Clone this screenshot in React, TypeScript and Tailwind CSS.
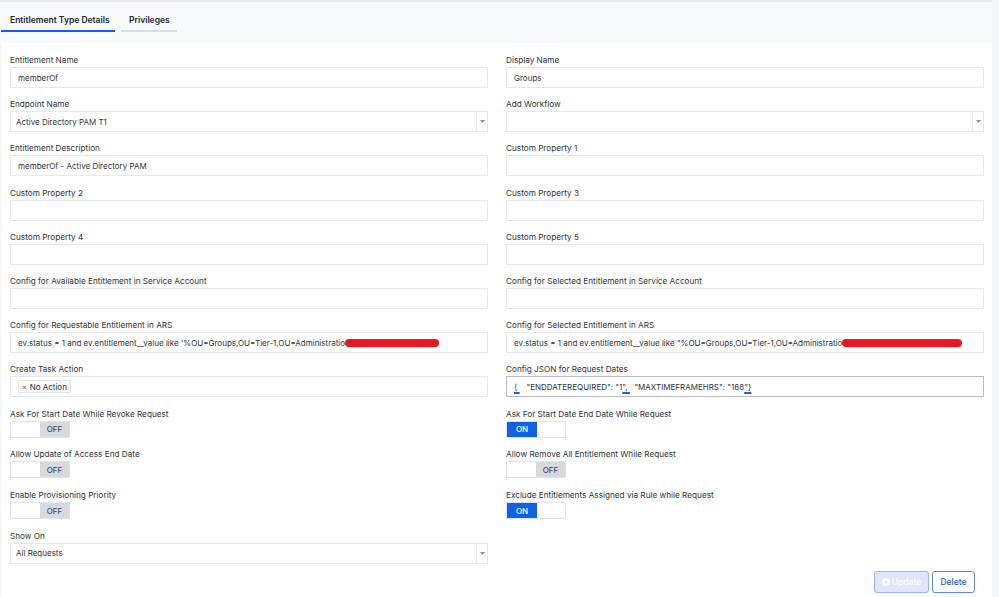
import React from "react";

const font = { fontFamily: "Inter, 'Liberation Sans', sans-serif" };

function Label({ children }: { children: React.ReactNode }) {
  return <div className="h-[11px] leading-[11px] text-[8.2px] text-[#2f343a] mb-[1px] whitespace-nowrap">{children}</div>;
}

function Input({ value, children }: { value?: string; children?: React.ReactNode }) {
  return (
    <div className="h-[21px] border border-[#e6e8eb] bg-white flex items-center px-[7px] text-[8px] text-[#2f343b] whitespace-nowrap overflow-hidden">
      {value}
      {children}
    </div>
  );
}

function Select({ value }: { value?: string }) {
  return (
    <div className="h-[21px] border border-[#e6e8eb] bg-white flex items-center text-[8px] text-[#2f343b]">
      <div className="flex-1 px-[5px] whitespace-nowrap">{value}</div>
      <div className="w-[11px] h-full border-l border-[#e6e8eb] flex items-center justify-center">
        <svg width="5" height="3" viewBox="0 0 5 3"><path d="M0 0 L5 0 L2.5 3 Z" fill="#8a8f96" /></svg>
      </div>
    </div>
  );
}

function Toggle({ on }: { on: boolean }) {
  return (
    <div className="flex h-[17px] w-[60px] border border-[#dfe2e6] bg-white text-[8px] font-medium">
      {on ? (
        <>
          <div className="w-[30px] bg-[#0f62e6] text-white flex items-center justify-center">ON</div>
          <div className="flex-1 bg-white" />
        </>
      ) : (
        <>
          <div className="w-[29px] bg-white" />
          <div className="flex-1 bg-[#d5dae1] text-[#4a4f57] flex items-center justify-center">OFF</div>
        </>
      )}
    </div>
  );
}

function Field({ label, children, toggle }: { label: string; children: React.ReactNode; toggle?: boolean }) {
  return (
    <div className={toggle ? "mb-[11.8px]" : "mb-[11.2px]"}>
      <Label>{label}</Label>
      {children}
    </div>
  );
}

function Redact({ w }: { w: string }) {
  return <span className={"inline-block h-[8px] rounded-full bg-[#e5191f] align-middle " + w} />;
}

function U({ children }: { children: React.ReactNode }) {
  return <span className="underline decoration-[#2a5bd7] decoration-[1.5px] underline-offset-2">{children}</span>;
}

export default function App() {
  const sql = "ev.status = 1 and ev.entitlement__value like '%OU=Groups,OU=Tier-1,OU=Administratio";
  return (
    <div className="w-[999px] h-[597px] overflow-hidden bg-[#f5f6f8] flex" style={font}>
      <div className="w-[992px] flex flex-col">
        <div className="h-[2px] bg-[#e6e8ec]" />
        <div className="h-[41px] bg-[#f8f9fa] flex items-start pt-[13px] pl-[1px] gap-[6px]">
          <div className="w-[114px] h-[17px] border-b-2 border-[#1361e0] text-[8.5px] font-semibold text-[#22262c] pl-[9px] leading-[11px]">
            Entitlement Type Details
          </div>
          <div className="w-[56px] h-[17px] border-b-2 border-[#cfe0fb] text-[8.5px] font-semibold text-[#22262c] pl-[8px] leading-[11px]">
            Privileges
          </div>
        </div>
        <div className="flex-1 bg-white ml-[2px] px-[8px] pt-[12px]">
          <div className="grid grid-cols-2 gap-x-[18px]">
            <Field label="Entitlement Name"><Input value="memberOf" /></Field>
            <Field label="Display Name"><Input value="Groups" /></Field>
            <Field label="Endpoint Name"><Select value="Active Directory PAM T1" /></Field>
            <Field label="Add Workflow"><Select /></Field>
            <Field label="Entitlement Description"><Input value="memberOf - Active Directory PAM" /></Field>
            <Field label="Custom Property 1"><Input /></Field>
            <Field label="Custom Property 2"><Input /></Field>
            <Field label="Custom Property 3"><Input /></Field>
            <Field label="Custom Property 4"><Input /></Field>
            <Field label="Custom Property 5"><Input /></Field>
            <Field label="Config for Available Entitlement in Service Account"><Input /></Field>
            <Field label="Config for Selected Entitlement in Service Account"><Input /></Field>
            <Field label="Config for Requestable Entitlement in ARS">
              <Input value={sql}><Redact w="w-[94px]" /></Input>
            </Field>
            <Field label="Config for Selected Entitlement in ARS">
              <Input value={sql.replace("like '", 'like "')}><Redact w="w-[120px]" /></Input>
            </Field>
            <Field label="Create Task Action">
              <div className="h-[21px] border border-[#e6e8eb] bg-white flex items-center px-[7px]">
                <span className="h-[13px] border border-[#e3e5e8] bg-[#fafafa] px-[3px] text-[8px] text-[#2f343b] flex items-center gap-[3px]">
                  <span className="text-[7px] text-[#666]">×</span>No Action
                </span>
              </div>
            </Field>
            <Field label="Config JSON for Request Dates">
              <div className="h-[21px] border border-[#b9bdc3] bg-white flex items-center px-[7px] text-[8px] text-[#2f343b] whitespace-pre">
                <U>{"{ "}</U>{'   "ENDDATEREQUIRED": "1'}<U>{'", '}</U>{'  "MAXTIMEFRAMEHRS": "168'}<U>{'"'}</U><U>{"}"}</U>
              </div>
            </Field>
            <Field label="Ask For Start Date While Revoke Request" toggle><Toggle on={false} /></Field>
            <Field label="Ask For Start Date End Date While Request" toggle><Toggle on /></Field>
            <Field label="Allow Update of Access End Date" toggle><Toggle on={false} /></Field>
            <Field label="Allow Remove All Entitlement While Request" toggle><Toggle on={false} /></Field>
            <Field label="Enable Provisioning Priority" toggle><Toggle on={false} /></Field>
            <Field label="Exclude Entitlements Assigned via Rule while Request" toggle><Toggle on /></Field>
            <Field label="Show On"><Select value="All Requests" /></Field>
            <div />
          </div>
          <div className="flex justify-end gap-[3px] pr-[9px] mt-[-4px]">
            <div className="h-[22px] w-[55px] rounded-[3px] border border-[#9db5f6] bg-[#dfe6fc] text-white text-[8.5px] font-medium flex items-center justify-center gap-[2px]">
              <svg width="8" height="8" viewBox="0 0 10 10"><circle cx="5" cy="5" r="5" fill="#fff" /><path d="M5 2.5v5M2.5 5h5" stroke="#dfe6fc" strokeWidth="1.4" /></svg>
              Update
            </div>
            <div className="h-[22px] w-[43px] rounded-[3px] border border-[#5f86ef] bg-white text-[#2c58d8] text-[8.5px] font-medium flex items-center justify-center">
              Delete
            </div>
          </div>
        </div>
      </div>
      <div className="flex-1 bg-[#f5f6f8]" />
    </div>
  );
}
